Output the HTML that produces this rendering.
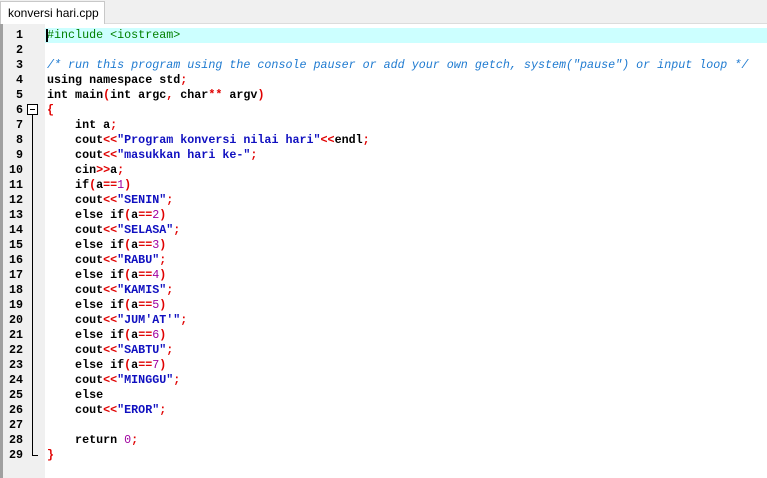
<!DOCTYPE html><html><head><style>
body{margin:0;width:767px;height:478px;background:#fff;overflow:hidden;position:relative;font-family:"Liberation Sans",sans-serif}
.tabbar{position:absolute;left:0;top:0;width:767px;height:23px;background:#f0f0f0;border-bottom:1px solid #dcdcdc}
.tab{position:absolute;left:0;top:1px;width:105px;height:23px;background:#fff;border:1px solid #c8c8c8;border-bottom:none;font-size:12px;line-height:22px;padding-left:7px;box-sizing:border-box;color:#000}
.lb{position:absolute;left:0;top:24px;width:3px;height:454px;background:#a0a0a0}
.gut{position:absolute;left:3px;top:24px;width:42px;height:454px;background:#f0f0f0}
.hl{position:absolute;left:45px;top:28px;width:722px;height:15px;background:#ccffff}
.caret{position:absolute;left:46px;top:29px;width:2px;height:13px;background:#000}
.code{position:absolute;left:47px;top:28px;font-family:"Liberation Mono",monospace;font-size:11.7px;line-height:15px;white-space:pre;font-weight:bold;color:#000}
.nums{position:absolute;left:3px;top:28px;width:20px;text-align:right;font-family:"Liberation Mono",monospace;font-size:11.7px;line-height:15px;font-weight:bold;white-space:pre}
.r{color:#e00000}.s{color:#1010c0}.c{color:#1e7ad0;font-style:italic;font-weight:normal}.g{color:#008000;font-weight:normal}.p{color:#a000a0;font-weight:normal}
.fold{position:absolute;left:27px;top:104px;width:9px;height:9px;border:1px solid #000;background:#fff}
.fold:after{content:"";position:absolute;left:2px;top:4px;width:5px;height:1px;background:#000}
.vl{position:absolute;left:32px;top:115px;width:1px;height:340px;background:#000}
.hl2{position:absolute;left:32px;top:455px;width:6px;height:1px;background:#000}
</style></head><body>
<div class="tabbar"><div class="tab">konversi hari.cpp</div></div>
<div class="lb"></div><div class="gut"></div><div class="hl"></div>
<div class="nums">1
2
3
4
5
6
7
8
9
10
11
12
13
14
15
16
17
18
19
20
21
22
23
24
25
26
27
28
29</div>
<div class="fold"></div><div class="vl"></div><div class="hl2"></div>
<div class="code"><span class="g">#include &lt;iostream&gt;</span>

<span class="c">/* run this program using the console pauser or add your own getch, system("pause") or input loop */</span>
using namespace std<span class="r">;</span>
int main<span class="r">(</span>int argc<span class="r">,</span> char<span class="r">**</span> argv<span class="r">)</span>
<span class="r">{</span>
    int a<span class="r">;</span>
    cout<span class="r">&lt;&lt;</span><span class="s">"Program konversi nilai hari"</span><span class="r">&lt;&lt;</span>endl<span class="r">;</span>
    cout<span class="r">&lt;&lt;</span><span class="s">"masukkan hari ke-"</span><span class="r">;</span>
    cin<span class="r">&gt;&gt;</span>a<span class="r">;</span>
    if<span class="r">(</span>a<span class="r">==</span><span class="p">1</span><span class="r">)</span>
    cout<span class="r">&lt;&lt;</span><span class="s">"SENIN"</span><span class="r">;</span>
    else if<span class="r">(</span>a<span class="r">==</span><span class="p">2</span><span class="r">)</span>
    cout<span class="r">&lt;&lt;</span><span class="s">"SELASA"</span><span class="r">;</span>
    else if<span class="r">(</span>a<span class="r">==</span><span class="p">3</span><span class="r">)</span>
    cout<span class="r">&lt;&lt;</span><span class="s">"RABU"</span><span class="r">;</span>
    else if<span class="r">(</span>a<span class="r">==</span><span class="p">4</span><span class="r">)</span>
    cout<span class="r">&lt;&lt;</span><span class="s">"KAMIS"</span><span class="r">;</span>
    else if<span class="r">(</span>a<span class="r">==</span><span class="p">5</span><span class="r">)</span>
    cout<span class="r">&lt;&lt;</span><span class="s">"JUM'AT'"</span><span class="r">;</span>
    else if<span class="r">(</span>a<span class="r">==</span><span class="p">6</span><span class="r">)</span>
    cout<span class="r">&lt;&lt;</span><span class="s">"SABTU"</span><span class="r">;</span>
    else if<span class="r">(</span>a<span class="r">==</span><span class="p">7</span><span class="r">)</span>
    cout<span class="r">&lt;&lt;</span><span class="s">"MINGGU"</span><span class="r">;</span>
    else
    cout<span class="r">&lt;&lt;</span><span class="s">"EROR"</span><span class="r">;</span>

    return <span class="p">0</span><span class="r">;</span>
<span class="r">}</span></div>
<div class="caret"></div>
</body></html>
